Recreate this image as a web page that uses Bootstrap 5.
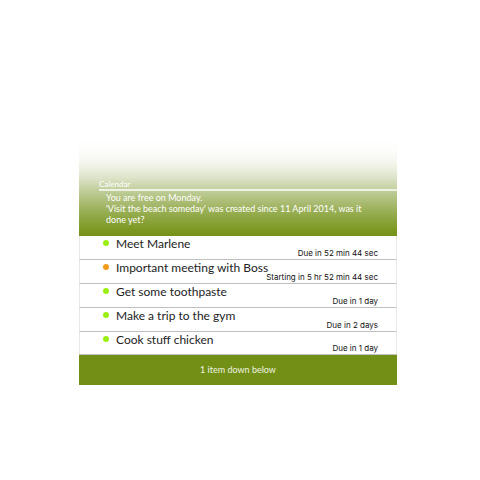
<!DOCTYPE html>
<html lang="en">
<head>
<meta charset="utf-8">
<meta name="viewport" content="width=device-width, initial-scale=1">
<title>Calendar</title>
<link href="https://cdn.jsdelivr.net/npm/bootstrap@5.3.0/dist/css/bootstrap.min.css" rel="stylesheet">
<style>
body { font-family: "Century Gothic", Lato, sans-serif; padding: 138px 83px 0 79px; }
.agenda-head {
  background: linear-gradient(#fff 0, #fcfcfa 14px, #f3f5ec 26px, #dce3c8 40px, #bdcb95 54px, #94ab4d 76px, #7b971f 93px, #76921a 100%);
  padding: 42px 0 11px 20px;
}
.agenda-title { font-size: 8px; line-height: 9px; border-bottom: 2px solid #eef2e2; }
.agenda-summary { font-size: 9px; line-height: 11px; padding: 1px 30px 0 7px; }
.agenda-item { height: 24px; border: 1px solid #e8e8e8; border-width: 0 1px 1px; border-bottom-color: #c0c0c0; padding: 0 18px 0 23px; }
.agenda-item:last-child { height: 23px; }
.agenda-item .dot { width: 6px; height: 6px; margin: 4px 7px 0 0; background: #9bee12; }
.agenda-item .dot-soon { background: #f39a1d; }
.agenda-name { font-size: 12px; line-height: 16px; min-width: 0; color: #222; }
.agenda-due { font-family: "Century Gothic", Inter, sans-serif; font-size: 8px; line-height: 11px; color: #111; }
.agenda-foot { background: #739016; color: #f0f4e2; font-size: 9px; line-height: 30px; }
</style>
</head>
<body class="bg-white">
<main>
  <header class="agenda-head text-white">
    <h1 class="agenda-title fw-normal mb-0">Calendar</h1>
    <p class="agenda-summary mb-0">You are free on Monday.<br>'Visit the beach someday' was created since 11 April 2014, was it done yet?</p>
  </header>
  <ul class="list-unstyled mb-0">
    <li class="agenda-item d-flex"><span class="dot rounded-circle flex-shrink-0"></span><span class="agenda-name text-nowrap">Meet Marlene</span><span class="agenda-due ms-auto align-self-end text-nowrap">Due in 52 min 44 sec</span></li>
    <li class="agenda-item d-flex"><span class="dot dot-soon rounded-circle flex-shrink-0"></span><span class="agenda-name text-nowrap">Important meeting with Boss</span><span class="agenda-due ms-auto align-self-end text-nowrap">Starting in 5 hr 52 min 44 sec</span></li>
    <li class="agenda-item d-flex"><span class="dot rounded-circle flex-shrink-0"></span><span class="agenda-name text-nowrap">Get some toothpaste</span><span class="agenda-due ms-auto align-self-end text-nowrap">Due in 1 day</span></li>
    <li class="agenda-item d-flex"><span class="dot rounded-circle flex-shrink-0"></span><span class="agenda-name text-nowrap">Make a trip to the gym</span><span class="agenda-due ms-auto align-self-end text-nowrap">Due in 2 days</span></li>
    <li class="agenda-item d-flex"><span class="dot rounded-circle flex-shrink-0"></span><span class="agenda-name text-nowrap">Cook stuff chicken</span><span class="agenda-due ms-auto align-self-end text-nowrap">Due in 1 day</span></li>
  </ul>
  <footer class="agenda-foot text-center">1 item down below</footer>
</main>
<script src="https://cdn.jsdelivr.net/npm/bootstrap@5.3.0/dist/js/bootstrap.bundle.min.js"></script>
</body>
</html>
